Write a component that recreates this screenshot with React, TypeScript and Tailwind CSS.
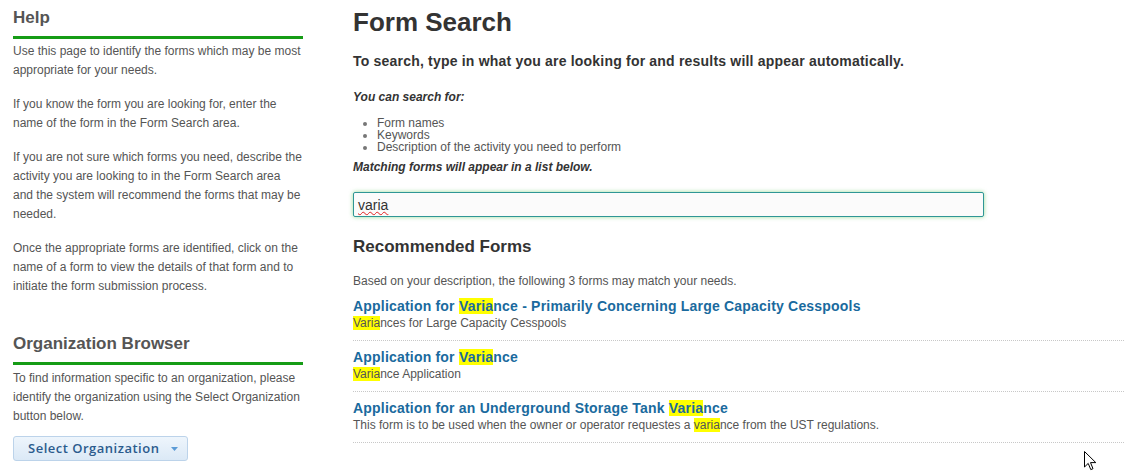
import React from "react";

const Hl = ({ children }: { children: React.ReactNode }) => (
  <span className="bg-[#ffff00]">{children}</span>
);

function Result({
  title,
  desc,
}: {
  title: React.ReactNode;
  desc: React.ReactNode;
}) {
  return (
    <div className="pt-[8px] pb-[9px] border-b border-dotted border-[#c8c8c8]">
      <div className="text-[14px] leading-[17px] font-bold text-[#1a6a9e] tracking-[0.2px]">
        {title}
      </div>
      <div className="text-[12px] leading-[16px] text-[#555] mt-[0px]">{desc}</div>
    </div>
  );
}

export default function App() {
  return (
    <div
      className="relative w-[1124px] h-[473px] bg-white overflow-hidden"
      style={{ fontFamily: '"Liberation Sans", Arial, sans-serif' }}
    >
      <div className="flex pl-[13px]">
        {/* Sidebar */}
        <aside className="w-[290px] shrink-0">
          <h2 className="mt-[8px] pb-[8px] text-[17px] leading-[20px] font-bold text-[#555] border-b-[3px] border-[#169c16]">
            Help
          </h2>
          <div className="mt-[3px] text-[12px] leading-[19px] text-[#555] flex flex-col gap-[15px]">
            <p>
              Use this page to identify the forms which may be most appropriate
              for your needs.
            </p>
            <p>
              If you know the form you are looking for, enter the name of the
              form in the Form Search area.
            </p>
            <p>
              If you are not sure which forms you need, describe the activity
              you are looking to in the Form Search area and the system will
              recommend the forms that may be needed.
            </p>
            <p>
              Once the appropriate forms are identified, click on the name of a
              form to view the details of that form and to initiate the form
              submission process.
            </p>
          </div>
          <h2 className="mt-[38px] pb-[8px] text-[17px] leading-[20px] font-bold text-[#555] border-b-[3px] border-[#169c16]">
            Organization Browser
          </h2>
          <p className="mt-[4px] text-[12px] leading-[19px] text-[#555]">
            To find information specific to an organization, please identify
            the organization using the Select Organization button below.
          </p>
          <button
            className="mt-[10px] h-[25px] w-[175px] flex items-center justify-between pl-[14px] pr-[9px] rounded-[3px] border border-[#bcd3ea] bg-gradient-to-b from-[#eef5fc] to-[#dbe9f6] text-[13px] font-semibold text-[#2b5b8d] tracking-[0.5px]"
            style={{ fontFamily: '"Open Sans", "DejaVu Sans", sans-serif' }}
          >
            <span>Select Organization</span>
            <svg width="7" height="4" viewBox="0 0 7 4">
              <path d="M0 0 L7 0 L3.5 4 Z" fill="#5b9bd6" />
            </svg>
          </button>
        </aside>

        {/* Main */}
        <main className="ml-[50px] flex-1">
          <h1 className="mt-[7px] text-[26px] leading-[30px] font-bold text-[#333]">
            Form Search
          </h1>
          <p className="mt-[16px] text-[14px] leading-[16px] font-bold text-[#333] tracking-[0.2px]">
            To search, type in what you are looking for and results will appear
            automatically.
          </p>
          <p className="mt-[21px] text-[12px] leading-[14px] font-bold italic text-[#333]">
            You can search for:
          </p>
          <ul className="mt-[13px] ml-[24px] list-disc text-[12px] leading-[12px] text-[#555] marker:text-[#777]">
            <li>Form names</li>
            <li>Keywords</li>
            <li>Description of the activity you need to perform</li>
          </ul>
          <p className="mt-[7px] text-[12px] leading-[14px] font-bold italic text-[#333]">
            Matching forms will appear in a list below.
          </p>
          <div className="mt-[18px] w-[631px] h-[25px] flex items-center pl-[4px] bg-[#fbfbfb] border border-[#2f9696] rounded-[2px] shadow-[0_0_4px_rgba(70,190,70,0.55)]">
            <span className="text-[14px] leading-[16px] text-[#333] underline decoration-wavy decoration-[#e02020] decoration-[1px] underline-offset-[1px]">
              varia
            </span>
          </div>
          <h3 className="mt-[20px] text-[17px] leading-[20px] font-bold text-[#333]">
            Recommended Forms
          </h3>
          <p className="mt-[17px] text-[12px] leading-[14px] text-[#555]">
            Based on your description, the following 3 forms may match your
            needs.
          </p>
          <div className="mt-[2px]">
            <Result
              title={
                <>
                  Application for <Hl>Varia</Hl>nce - Primarily Concerning Large
                  Capacity Cesspools
                </>
              }
              desc={
                <>
                  <Hl>Varia</Hl>nces for Large Capacity Cesspools
                </>
              }
            />
            <Result
              title={
                <>
                  Application for <Hl>Varia</Hl>nce
                </>
              }
              desc={
                <>
                  <Hl>Varia</Hl>nce Application
                </>
              }
            />
            <Result
              title={
                <>
                  Application for an Underground Storage Tank <Hl>Varia</Hl>nce
                </>
              }
              desc={
                <>
                  This form is to be used when the owner or operator requestes a{" "}
                  <Hl>varia</Hl>nce from the UST regulations.
                </>
              }
            />
          </div>
        </main>
      </div>

      {/* mouse cursor */}
      <svg
        className="absolute left-[1084px] top-[451px]"
        width="13"
        height="20"
        viewBox="0 0 13 20"
      >
        <path
          d="M0.5 0.5 L0.5 16 L4.2 12.4 L6.8 18.6 L9 17.7 L6.5 11.6 L11.8 11.6 Z"
          fill="#fff"
          stroke="#000"
          strokeWidth="1"
          strokeLinejoin="miter"
        />
      </svg>
    </div>
  );
}
